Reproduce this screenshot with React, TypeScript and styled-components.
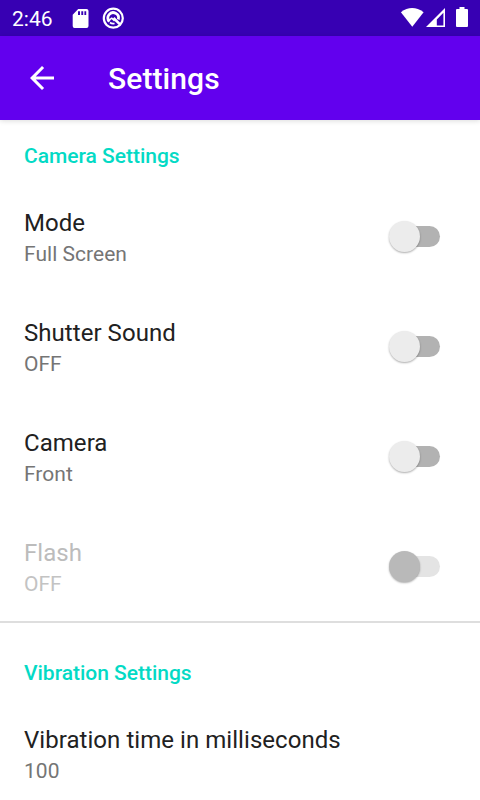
import React from 'react';
import styled, { createGlobalStyle } from 'styled-components';

const GlobalStyle = createGlobalStyle`
  * { box-sizing: border-box; }
  html, body { margin: 0; background: #fff; }
  body { font-family: Roboto, sans-serif; overflow: hidden; }
`;

const Screen = styled.div`
  width: 480px;
  height: 800px;
  overflow: hidden;
  background: #fff;
  display: flex;
  flex-direction: column;
`;

const StatusBar = styled.header`
  flex: none;
  height: 36px;
  padding: 0 11px 0 12px;
  display: flex;
  justify-content: space-between;
  background: #3700b3;
  color: #fff;
`;

const StatusGroup = styled.div`
  display: flex;
  align-items: flex-start;
`;

const Clock = styled.span`
  width: 60px;
  padding-top: 7px;
  font-size: 21px;
  line-height: 25px;
`;

const StatusIcon = styled.svg<{ $top: number; $gap?: number }>`
  display: block;
  flex: none;
  margin-top: ${(p) => p.$top}px;
  margin-left: ${(p) => p.$gap ?? 0}px;
`;

const AppBar = styled.div`
  flex: none;
  height: 84px;
  display: flex;
  align-items: center;
  padding-left: 24px;
  background: #6200ee;
  color: #fff;
  box-shadow: 0 1px 5px rgba(0, 0, 0, 0.14);
`;

const BackButton = styled.button`
  width: 84px;
  height: 36px;
  padding: 0;
  border: 0;
  background: none;
  color: inherit;
  svg { display: block; }
`;

const Title = styled.h1`
  margin: 0;
  padding-top: 2px;
  font-size: 30px;
  font-weight: 500;
  line-height: 36px;
  letter-spacing: 0.08px;
`;

const Section = styled.section`
  & + & {
    margin-top: -1px;
    border-top: 2px solid #dedede;
    padding-top: 14px;
  }
`;

const SectionTitle = styled.h2`
  margin: 0;
  height: 62px;
  padding: 24px 24px 0;
  font-size: 21px;
  font-weight: 500;
  line-height: 25px;
  letter-spacing: -0.02px;
  color: #03dac5;
`;

const Preference = styled.div`
  height: 110px;
  padding: 27px 40px 0 24px;
  display: flex;
  align-items: flex-start;
  justify-content: space-between;
`;

const PreferenceTitle = styled.div<{ $disabled?: boolean }>`
  font-size: 24px;
  line-height: 28px;
  letter-spacing: 0.05px;
  color: ${(p) => (p.$disabled ? '#bcbcbc' : '#212121')};
`;

const Summary = styled.div<{ $disabled?: boolean }>`
  margin-top: 5px;
  font-size: 21px;
  line-height: 25px;
  letter-spacing: 0.03px;
  color: ${(p) => (p.$disabled ? '#c3c3c3' : '#757575')};
`;

const Switch = styled.div`
  width: 51px;
  height: 31px;
  margin-top: 12px;
  display: flex;
  align-items: center;
`;

const Thumb = styled.span<{ $disabled?: boolean }>`
  flex: none;
  width: 31px;
  height: 31px;
  border-radius: 50%;
  background: ${(p) => (p.$disabled ? '#b9b9b9' : '#ececec')};
  box-shadow: 0 1px 2px rgba(0, 0, 0, 0.32);
  z-index: 1;
`;

const Track = styled.span<{ $disabled?: boolean }>`
  flex: none;
  width: 36px;
  height: 21px;
  margin-left: -16px;
  border-radius: 11px;
  background: ${(p) => (p.$disabled ? '#e4e4e4' : '#b2b2b2')};
`;

interface RowProps {
  title: string;
  summary: string;
  toggle?: boolean;
  disabled?: boolean;
}

const Row = ({ title, summary, toggle, disabled }: RowProps) => (
  <Preference>
    <div>
      <PreferenceTitle $disabled={disabled}>{title}</PreferenceTitle>
      <Summary $disabled={disabled}>{summary}</Summary>
    </div>
    {toggle && (
      <Switch role="switch" aria-checked={false} aria-disabled={disabled}>
        <Thumb $disabled={disabled} />
        <Track $disabled={disabled} />
      </Switch>
    )}
  </Preference>
);

export default function App() {
  return (
    <Screen>
      <GlobalStyle />
      <StatusBar>
        <StatusGroup>
          <Clock>2:46</Clock>
          <StatusIcon $top={9} width="17" height="19" viewBox="0 0 17 19">
            <path
              fill="#fff"
              fillRule="evenodd"
              d="M6.2 0H14.5Q16.5 0 16.5 2V17Q16.5 19 14.5 19H2.5Q.7 19 .7 17V5.7ZM6 2.2V6H8V2.2ZM9.3 2.2V6H11.2V2.2ZM12.4 2.2V6H14.2V2.2Z"
            />
          </StatusIcon>
          <StatusIcon $top={7} $gap={13} width="23" height="23" viewBox="0 0 23 23" fill="none" stroke="#fff">
            <circle cx="11.3" cy="11.2" r="9.5" strokeWidth="2.2" />
            <path d="M7.4 14.6A5.3 5.3 0 1 1 16.3 12.5" strokeWidth="2.8" />
            <path d="M11.5 11L18 17.4" strokeWidth="2.6" />
            <path d="M7 13.2L9.8 11.2L12.6 13.8" strokeWidth="1.6" />
            <path d="M8 15.5Q9.8 17 12.6 16.5" strokeWidth="1.7" />
          </StatusIcon>
        </StatusGroup>
        <StatusGroup>
          <StatusIcon $top={8} width="24" height="19" viewBox="0 0 24 19">
            <path fill="#fff" d="M.9 4.2Q12-4 23.6 4.2L12.3 18.8Z" />
          </StatusIcon>
          <StatusIcon $top={8} $gap={2} width="20" height="19" viewBox="0 0 20 19">
            <path fill="#fff" fillRule="evenodd" d="M0 19L19 0V19ZM10.8 11.4V17.4H17.4V4.7Z" />
          </StatusIcon>
          <StatusIcon $top={7} $gap={10} width="13" height="20" viewBox="0 0 13 20">
            <path fill="#fff" d="M3.5 0H8.5V2H11Q12 2 12 3V19Q12 20 11 20H1Q0 20 0 19V3Q0 2 1 2H3.5Z" />
          </StatusIcon>
        </StatusGroup>
      </StatusBar>
      <AppBar>
        <BackButton aria-label="Back">
          <svg width="36" height="36" viewBox="0 0 24 24">
            <path fill="#fff" d="M20 11H7.83l5.59-5.59L12 4l-8 8 8 8 1.41-1.41L7.83 13H20v-2z" />
          </svg>
        </BackButton>
        <Title>Settings</Title>
      </AppBar>
      <main>
        <Section>
          <SectionTitle>Camera Settings</SectionTitle>
          <Row title="Mode" summary="Full Screen" toggle />
          <Row title="Shutter Sound" summary="OFF" toggle />
          <Row title="Camera" summary="Front" toggle />
          <Row title="Flash" summary="OFF" toggle disabled />
        </Section>
        <Section>
          <SectionTitle>Vibration Settings</SectionTitle>
          <Row title="Vibration time in milliseconds" summary="100" />
        </Section>
      </main>
    </Screen>
  );
}
